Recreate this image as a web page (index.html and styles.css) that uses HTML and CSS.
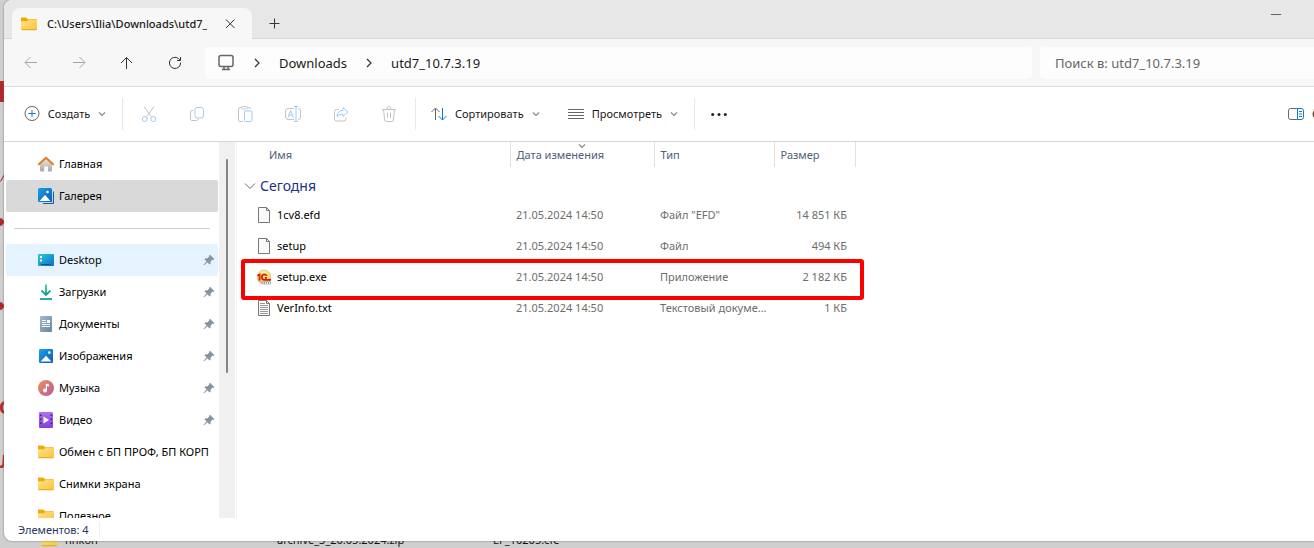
FILE: index.html
```html
<!DOCTYPE html>
<html lang="ru">
<head>
<meta charset="utf-8">
<title>C:\Users\Ilia\Downloads\utd7_10.7.3.19</title>
<link rel="stylesheet" href="styles.css">
</head>
<body>
<svg class="defs" aria-hidden="true">
  <defs>
    <linearGradient id="gFolder" x1="0" y1="0" x2="1" y2="1"><stop offset="0" stop-color="#ffe08a"/><stop offset="1" stop-color="#fcc43a"/></linearGradient>
    <linearGradient id="gBlue" x1="0" y1="0" x2="1" y2="1"><stop offset="0" stop-color="#1ba0e6"/><stop offset="1" stop-color="#0a5cb8"/></linearGradient>
    <linearGradient id="gDesk" x1="0" y1="0" x2="1" y2="1"><stop offset="0" stop-color="#2bcbd6"/><stop offset="1" stop-color="#0b6fc4"/></linearGradient>
    <linearGradient id="gDown" x1="0" y1="0" x2="0" y2="1"><stop offset="0" stop-color="#3cc98f"/><stop offset="1" stop-color="#0f9f8f"/></linearGradient>
    <linearGradient id="gDoc" x1="0" y1="0" x2="1" y2="1"><stop offset="0" stop-color="#a5bace"/><stop offset="1" stop-color="#6385a5"/></linearGradient>
    <linearGradient id="gMusic" x1="0" y1="0" x2="1" y2="1"><stop offset="0" stop-color="#f09152"/><stop offset="1" stop-color="#b25ba8"/></linearGradient>
    <linearGradient id="gVideo" x1="0" y1="0" x2="0" y2="1"><stop offset="0" stop-color="#b070f0"/><stop offset="1" stop-color="#8140dc"/></linearGradient>
    <linearGradient id="gHome" x1="0" y1="0" x2="0" y2="1"><stop offset="0" stop-color="#ececec"/><stop offset="1" stop-color="#a8a8a8"/></linearGradient>
    <radialGradient id="gApp" cx=".45" cy=".3" r=".75"><stop offset="0" stop-color="#fff9b0"/><stop offset=".6" stop-color="#f8de68"/><stop offset="1" stop-color="#c69a45"/></radialGradient>
  </defs>
  <symbol id="folder" viewBox="0 0 16 16"><path fill="#f2a900" d="M0 2.600Q0 1.500 1.100 1.500H5.200L7 3.200H15Q16 3.200 16 4.200V8H0z"/><path fill="url(#gFolder)" d="M0 5.200H6L7.500 3.800H15Q16 3.800 16 4.800V13Q16 14 15 14H1Q0 14 0 13z"/><path fill="#e8a317" d="M.2 13.300H15.800Q15.500 14.200 14.800 14.200H1.200Q.5 14.200.2 13.300z"/></symbol>
  <symbol id="pin" viewBox="0 0 12 12"><path fill="#8695a3" d="M7 .8 11.300 5 10.400 5.900 9.500 5.700 7.600 7.600 7.500 9.700 6.600 10.500 4.300 8.300 1.200 11.200.5 10.700 3.500 7.400 1.400 5.300 2.200 4.400 4.400 4.300 6.300 2.500 6.100 1.600z"/></symbol>
  <symbol id="chev" viewBox="0 0 8 8"><path fill="none" stroke="#8a8a8a" stroke-width="1.200" d="M1 2.500 4 5.500 7 2.500"/></symbol>
  <symbol id="picture" viewBox="0 0 16 16"><rect x="1" y="1" width="14" height="14" rx="1.200" fill="url(#gBlue)"/><path fill="#fff" d="M2.500 13.500 8 7.800 13.500 13.500z"/><circle cx="11.300" cy="4.600" r="1.300" fill="#fff"/></symbol>
  <symbol id="page" viewBox="0 0 14 18"><path fill="#fafafa" stroke="#777" d="M1.500 1.500H9.500L12.500 4.500V16.500H1.500z"/><path fill="none" stroke="#777" d="M9.500 1.500V4.500H12.500"/></symbol>
</svg>

<div class="desktop">
  <div class="edge" aria-hidden="true">
    <span class="mark block"></span><span class="mark slash"></span>
    <span class="mark gem first"></span><span class="mark gem second"></span>
    <span class="mark letter upper">С</span><span class="mark letter lower">Л</span>
  </div>

  <div class="window">
    <header class="titlebar">
      <div class="tab">
        <svg class="i16"><use href="#folder"/></svg>
        <span class="tab-title">C:\Users\Ilia\Downloads\utd7_10.7.3.19</span>
        <button class="plain" aria-label="Закрыть вкладку"><svg class="i12" viewBox="0 0 12 12"><path class="dark" d="m2 1.500 8.500 8.500m0-8.500L2 10"/></svg></button>
      </div>
      <button class="plain newtab" aria-label="Новая вкладка"><svg class="i12" viewBox="0 0 12 12"><path class="dark" d="M6.500 1.500v10M1.500 6.500h10"/></svg></button>
      <button class="plain minimize" aria-label="Свернуть"><svg class="i12" viewBox="0 0 12 12"><path class="gray" d="M1 6.500h10"/></svg></button>
    </header>

    <nav class="navbar" aria-label="Навигация">
      <button class="plain nav" aria-label="Назад"><svg class="i14" viewBox="0 0 14 14"><path class="faint" d="M13 6.500H1.500M6.500 1 1 6.500l5.500 5.500"/></svg></button>
      <button class="plain nav" aria-label="Вперёд"><svg class="i14" viewBox="0 0 14 14"><path class="faint" d="M1 6.500h11.500M7.500 1 13 6.500l-5.500 5.500"/></svg></button>
      <button class="plain nav" aria-label="Вверх"><svg class="i14" viewBox="0 0 14 14"><path class="dark" d="M6.500 13V1.500M1 7 6.500 1.500 12 7"/></svg></button>
      <button class="plain nav" aria-label="Обновить"><svg class="i14" viewBox="0 0 14 14"><path class="dark" d="M12.600 6.500A5.600 5.600 0 1 1 10.500 2.500L12 4M12.500 1v3.500H9"/></svg></button>
      <div class="address">
        <svg class="i18" viewBox="0 0 18 18"><rect class="pc" x="2" y="1.500" width="14" height="11" rx="2"/><path class="pc" d="M7 12.500v2.500m4-2.500v2.500M5 15.500h8"/></svg>
        <svg class="i12" viewBox="0 0 12 12"><path class="crumb" d="m4 2 4 4-4 4"/></svg>
        <a href="#downloads">Downloads</a>
        <svg class="i12" viewBox="0 0 12 12"><path class="crumb" d="m4 2 4 4-4 4"/></svg>
        <a href="#utd7">utd7_10.7.3.19</a>
      </div>
      <input class="search" type="search" aria-label="Поиск" placeholder="Поиск в: utd7_10.7.3.19">
    </nav>

    <div class="toolbar">
      <button class="plain cmd create"><svg class="i16" viewBox="0 0 16 16"><circle class="gray" cx="8" cy="7.500" r="7"/><path class="blue" d="M8 4v7M4.500 7.500h7"/></svg>Создать<svg class="i8"><use href="#chev"/></svg></button>
      <div class="group tools">
        <button class="plain" aria-label="Вырезать"><svg class="i16" viewBox="0 0 16 16"><path class="pale" d="M3 .5 10.500 11M13 .5 5.500 11"/><circle class="sky" cx="3.700" cy="13" r="2.500"/><circle class="sky" cx="12.300" cy="13" r="2.500"/></svg></button>
        <button class="plain" aria-label="Копировать"><svg class="i16" viewBox="0 0 16 16"><path class="pale" d="M4.500 4.500H3Q1.500 4.500 1.500 6v7Q1.500 14.500 3 14.500h4.500Q9 14.500 9.500 13"/><rect class="sky" x="6" y="1.500" width="8.500" height="10.500" rx="2"/></svg></button>
        <button class="plain" aria-label="Вставить"><svg class="i16" viewBox="0 0 16 16"><path class="pale" d="M6 15.500H3Q1.500 15.500 1.500 14V3Q1.500 1.500 3 1.500h1.500m6 0H12Q13.500 1.500 13.500 3"/><rect class="pale" x="4.500" y=".5" width="6" height="2.500" rx="1"/><rect class="sky" x="7.500" y="5" width="7.500" height="10.500" rx="1"/></svg></button>
        <button class="plain" aria-label="Переименовать"><svg class="i16" viewBox="0 0 16 16"><path class="pale" d="M9 2.500H3Q.5 2.500.5 5v6Q.5 13.500 3 13.500h6m4-11q2.500 0 2.500 2.500v6q0 2.500-2.500 2.500"/><path class="sky" d="m3 11.500 2.700-7 2.700 7M3.800 9h3.800M9 .5h4M11 .5v15M9 15.500h4"/></svg></button>
        <button class="plain" aria-label="Поделиться"><svg class="i16" viewBox="0 0 16 16"><path class="pale" d="M6 3.500H3.500Q1.500 3.500 1.500 5.500V13Q1.500 15 3.500 15H11Q13 15 13 13v-1.500"/><path class="sky" d="M10 1.500 15 6l-5 4.500V8Q6 8 4 10.500 4.500 4.500 10 4.200z"/></svg></button>
        <button class="plain" aria-label="Удалить"><svg class="i16" viewBox="0 0 16 16"><path class="pale" d="M1 3.500h14M2.500 3.500l1.200 10.500q.2 1.500 1.500 1.500h5.600q1.300 0 1.500-1.500l1.200-10.500M6 3.500Q6 .5 8 .5t2 3M6.500 6.500v5.500m3-5.500v5.500"/></svg></button>
      </div>
      <div class="group views">
        <button class="plain cmd"><svg class="i16" viewBox="0 0 16 16"><path class="gray" d="M4.500 14V2M.5 6l4-4 4 4"/><path class="blue" d="M11.500 2v12m-4-4 4 4 4-4"/></svg>Сортировать<svg class="i8"><use href="#chev"/></svg></button>
        <button class="plain cmd"><svg class="i16" viewBox="0 0 16 16"><path class="gray" d="M0 3.500h16m-16 3h16m-16 3h16m-16 3h16"/></svg>Просмотреть<svg class="i8"><use href="#chev"/></svg></button>
      </div>
      <div class="group more"><button class="plain" aria-label="Дополнительно"><svg class="i16" viewBox="0 0 16 16"><g fill="#222"><circle cx="1.700" cy="8.500" r="1.500"/><circle cx="8" cy="8.500" r="1.500"/><circle cx="14.300" cy="8.500" r="1.500"/></g></svg></button></div>
      <button class="plain cmd details"><svg class="i16" viewBox="0 0 16 16"><path class="gray" d="M9.500 2.500h-7q-2 0-2 2v7q0 2 2 2h7"/><path class="blue" d="M9.500 2.500H13q2.500 0 2.500 2v7q0 2-2.500 2H9.500zM11 5.500h3M11 8h3m-3 2.500h3"/></svg>Сведения</button>
    </div>

    <div class="body">
      <aside class="sidebar">
        <ul class="places">
          <li><a href="#home"><svg class="i16" viewBox="0 0 16 16"><path fill="url(#gHome)" d="M2 7 8 1.500 14 7v7.500q0 1-1 1h-3V10.500H6.200v5H3q-1 0-1-1z"/><path fill="none" stroke="#e5791c" stroke-width="2" stroke-linejoin="round" stroke-linecap="round" d="M1 8.200 8 1.700 15 8.200"/></svg><span>Главная</span></a></li>
          <li><a class="current" href="#gallery"><svg class="i16" viewBox="0 0 16 16"><path fill="#0a5cb8" d="M4 3h10.500q1.500 0 1.500 1.500V14.500q0 1.500-1.500 1.500H5z"/><rect width="14" height="14" rx="1.500" fill="url(#gBlue)"/><path fill="none" stroke="#d9d9d9" d="M14.500 2v12.500H3"/><path fill="#fff" d="M1.500 13 7 7l5.500 6z"/><circle cx="9.500" cy="4" r="1.300" fill="#fff"/></svg><span>Галерея</span></a></li>
          <li class="rule"></li>
          <li><a class="hover" href="#desktop"><svg class="i16" viewBox="0 0 16 16"><rect y="2" width="16" height="12" rx="1" fill="url(#gDesk)"/><path fill="#fff" d="M2 4h2v2H2zm0 3.500h2v2H2z"/><path stroke="#064b83" d="M3 12.500h11" stroke-dasharray="8 1 1 1"/></svg><span>Desktop</span><svg class="i12"><use href="#pin"/></svg></a></li>
          <li><a href="#loads"><svg class="i16" viewBox="0 0 16 16"><path fill="none" stroke="url(#gDown)" stroke-width="1.800" d="M3.500 6.500 8 11l4.500-4.500M8 11 8.010.5"/><path stroke="#16a392" stroke-width="1.800" d="M2 15h12"/></svg><span>Загрузки</span><svg class="i12"><use href="#pin"/></svg></a></li>
          <li><a href="#docs"><svg class="i16" viewBox="0 0 16 16"><rect x="2" width="12" height="16" rx="1" fill="url(#gDoc)"/><path stroke="#fff" d="M4 4.500h4M4 6.500h4m-4 2h8m-8 2h8"/><path fill="#fff" d="M9 4h3v3H9z"/></svg><span>Документы</span><svg class="i12"><use href="#pin"/></svg></a></li>
          <li><a href="#pics"><svg class="i16"><use href="#picture"/></svg><span>Изображения</span><svg class="i12"><use href="#pin"/></svg></a></li>
          <li><a href="#music"><svg class="i16" viewBox="0 0 16 16"><circle cx="8" cy="8" r="8" fill="url(#gMusic)"/><circle cx="7" cy="10.500" r="2" fill="#fff"/><path fill="#fff" d="M7.800 3.500 11 4.500V6.500L9 6v4.500H7.800z"/></svg><span>Музыка</span><svg class="i12"><use href="#pin"/></svg></a></li>
          <li><a href="#video"><svg class="i16" viewBox="0 0 16 16"><rect x="1" y="0" width="14" height="16" rx="1" fill="url(#gVideo)"/><path fill="#fff" d="m5.500 4.500 5.500 3.500-5.500 3.500z"/><path stroke="#43208a" stroke-width="1.500" stroke-dasharray="1.500 2.500" d="M2.700 2.500v12m10.600-12v12"/></svg><span>Видео</span><svg class="i12"><use href="#pin"/></svg></a></li>
          <li><a href="#exchange"><svg class="i16"><use href="#folder"/></svg><span>Обмен с БП ПРОФ, БП КОРП</span></a></li>
          <li><a href="#shots"><svg class="i16"><use href="#folder"/></svg><span>Снимки экрана</span></a></li>
          <li><a href="#useful"><svg class="i16"><use href="#folder"/></svg><span>Полезное</span></a></li>
        </ul>
        <div class="scroll"><div class="thumb"></div></div>
      </aside>

      <main class="files">
        <table>
          <colgroup><col class="c-name"><col class="c-date"><col class="c-type"><col class="c-size"></colgroup>
          <thead><tr><th>Имя</th><th class="sorted">Дата изменения<svg class="i8 sort"><use href="#chev"/></svg></th><th>Тип</th><th>Размер</th></tr></thead>
          <tbody>
            <tr class="section"><td colspan="4"><div class="cell"><svg class="i12" viewBox="0 0 12 12"><path class="gray" d="m1 3.500 5 5 5-5"/></svg>Сегодня</div></td></tr>
            <tr><td><div class="cell"><svg class="page"><use href="#page"/></svg>1cv8.efd</div></td><td>21.05.2024 14:50</td><td>Файл "EFD"</td><td>14 851 КБ</td></tr>
            <tr><td><div class="cell"><svg class="page"><use href="#page"/></svg>setup</div></td><td>21.05.2024 14:50</td><td>Файл</td><td>494 КБ</td></tr>
            <tr><td><div class="cell"><svg class="page" viewBox="1 1 14 15"><circle cx="8" cy="8.500" r="7" fill="url(#gApp)" stroke="#c9b99b" stroke-width=".6"/><path fill="none" stroke="#db1b10" stroke-width="1.800" d="M1.500 7.300 3.600 6v6M10.800 7.400Q9.900 5.900 8.200 5.900 5.900 6.100 5.900 8.700t2.400 2.600H15M11 9.300H8.800"/><path fill="#fff" stroke="#889" stroke-width=".5" d="M7 13.300h8.500v2.200H7z"/><path stroke="#338" stroke-width=".8" stroke-dasharray="1 1" d="M8 14.400h7"/></svg>setup.exe</div></td><td>21.05.2024 14:50</td><td>Приложение</td><td>2 182 КБ</td></tr>
            <tr><td><div class="cell"><svg class="page" viewBox="0 0 14 18"><use href="#page" width="14" height="18"/><path stroke="#999" d="M3 4.500h5M3 6.500h8m-8 2h8m-8 2h8m-8 2h8m-8 2h8"/></svg>VerInfo.txt</div></td><td>21.05.2024 14:50</td><td>Текстовый документ</td><td>1 КБ</td></tr>
          </tbody>
        </table>
        <div class="highlight"></div>
      </main>
    </div>

    <footer class="status"><span>Элементов: 4</span></footer>
  </div>

  <div class="behind" aria-hidden="true"><svg class="i16"><use href="#folder"/></svg><span class="b-folder">hhkon</span><span class="b-file">archive_3_20.05.2024.zip</span><span>EF_10205.cfe</span></div>
</div>
</body>
</html>
```

FILE: styles.css
```css
* { box-sizing: border-box; }
body { margin: 0; font: 12px/16px "Noto Sans", "Open Sans", sans-serif; color: #1a1a1a; }
a { color: inherit; text-decoration: none; }
svg { display: block; flex: none; }
.defs { position: absolute; width: 0; height: 0; }
.i8 { width: 8px; height: 8px; }
.i12 { width: 12px; height: 12px; }
.i14 { width: 14px; height: 14px; }
.i16 { width: 16px; height: 16px; }
.i18 { width: 18px; height: 18px; }
.dark, .gray, .faint, .pale, .sky, .blue, .pc, .crumb { fill: none; stroke: #333; }
.gray { stroke: #666; }
.faint { stroke: #a6a6a6; }
.pale { stroke: #c4c4c4; }
.sky { stroke: #9fcdf0; }
.blue { stroke: #0f78d4; }
.pc { stroke: #666; stroke-width: 1.5; }
.crumb { stroke-width: 1.2; }
.plain { display: flex; align-items: center; justify-content: center; padding: 0; border: 0; background: none; font: inherit; color: inherit; white-space: nowrap; }

.desktop { position: relative; display: flex; flex-direction: column; height: 100vh; padding-left: 4px; overflow: hidden; background: #cfcfcf; }
.window { position: relative; flex: 1; min-height: 0; display: flex; flex-direction: column; overflow: hidden; background: #fff; border-radius: 8px 0 0 8px; box-shadow: 0 0 2px #666; }

.titlebar { display: flex; height: 39px; padding: 8px 32px 0 8px; background: #e7e7e7; border-bottom: 1px solid #d8d8d8; }
.tab { display: flex; align-items: center; width: 240px; height: 31px; padding: 0 16px 0 9px; background: #f7f7f7; border-radius: 8px 8px 0 0; }
.tab-title { flex: 1; min-width: 0; margin: 0 17px 0 10px; overflow: hidden; white-space: nowrap; font-size: 11px; font-weight: 500; }
.newtab { margin-left: 16px; height: 30px; }
.minimize { margin-left: auto; height: 12px; }

.navbar { display: flex; align-items: center; height: 48px; padding-left: 3px; background: #f7f7f7; border-bottom: 1px solid #dcdcdc; font-size: 13px; }
.nav { width: 48px; height: 32px; }
.address { flex: 1; display: flex; align-items: center; gap: 16px; height: 32px; margin: 0 8px 0 6px; padding: 0 12px; background: #fdfdfd; border-radius: 5px; }
.search { width: 274px; height: 32px; padding: 0 15px; border: 0; border-radius: 5px 0 0 5px; background: #fdfdfd; font: inherit; color: #666; }
.search::placeholder { color: #666; opacity: 1; }

.toolbar { display: flex; align-items: center; height: 55px; border-bottom: 1px solid #d6d6d6; overflow: hidden; font-size: 11px; }
.cmd { gap: 8px; }
.create { width: 118px; padding-left: 4px; }
.group { display: flex; align-items: center; height: 32px; border-left: 1px solid #e8e8e8; }
.tools { width: 293px; gap: 32px; padding-left: 18px; }
.views { width: 279px; gap: 28px; padding-left: 15px; }
.more { padding-left: 16px; }
.details { width: 26px; margin-left: auto; justify-content: flex-start; overflow: hidden; }

.body { flex: 1; min-height: 0; display: flex; }
.sidebar { display: flex; width: 231px; overflow: hidden; }
.places { flex: 1; min-width: 0; margin: 0; padding: 6px 1px 0 2px; list-style: none; color: #000; font-size: 11px; }
.places a { display: flex; align-items: center; gap: 5px; height: 32px; padding: 0 3px 0 32px; border-radius: 2px; }
.places span { flex: 1; min-width: 0; white-space: nowrap; }
.places a.current { background: #d9d9d9; }
.places a.hover { background: #e5f3ff; }
.rule { height: 32px; padding: 16px 8px 0; }
.rule::before { content: ""; display: block; height: 1px; background: #d0d0d0; }
.scroll { width: 16px; padding: 17px 7px 0; background: #f0f0f0; }
.thumb { height: 214px; background: #858585; border-radius: 1px; }

.files { position: relative; flex: 1; min-width: 0; margin-left: 1px; border-left: 1px solid #f3f3f3; }
table { table-layout: fixed; width: 618px; border-collapse: collapse; font-size: 11px; color: #6d6d6d; }
.c-name { width: 273px; }
.c-date { width: 144px; }
.c-type { width: 120px; }
.c-size { width: 81px; }
th { position: relative; height: 25px; padding: 0 6px; border-right: 1px solid #e2e2e2; text-align: left; font-weight: 400; color: #4c607a; }
th:first-child { padding-left: 32px; }
td { height: 31px; padding: 0 6px; overflow: hidden; white-space: nowrap; text-overflow: ellipsis; }
td:first-child { padding-left: 20px; color: #000; }
td:last-child { padding-right: 8px; text-align: right; }
.cell { display: flex; align-items: center; gap: 6px; }
.page { width: 14px; height: 18px; }
.section td:first-child { height: 32px; padding: 5px 7px 0; text-align: left; font-size: 14px; color: #1e3287; }
.section .cell { gap: 4px; }
.sort { position: absolute; top: 0; left: 50%; margin-left: -4px; }
.highlight { position: absolute; top: 117px; left: 4px; width: 623px; height: 41px; border: 4px solid #fe0000; border-radius: 3px; }

.status { display: flex; align-items: center; height: 23px; padding-left: 14px; font-size: 11px; color: #26395c; }
.status span { padding-right: 10px; border-right: 1px solid #efefef; }

.behind { display: flex; align-items: flex-end; height: 7px; padding-left: 37px; overflow: hidden; color: #111; font-size: 11px; white-space: nowrap; }
.behind span { height: 16px; line-height: 16px; }
.b-folder { width: 214px; padding-left: 8px; }
.b-file { width: 222px; padding-left: 6px; }

.edge { position: absolute; inset: 0 auto 0 0; width: 5px; overflow: hidden; }
.mark { position: absolute; left: 0; color: #b3262b; }
.block { top: 81px; width: 4px; height: 21px; background: #b3262b; }
.slash { top: 174px; width: 1px; height: 8px; margin-left: 2px; background: #b3262b; transform: rotate(30deg); }
.gem { width: 6px; height: 6px; margin-left: -2px; background: #b3262b; transform: rotate(45deg); }
.first { top: 219px; }
.second { top: 303px; }
.letter { font-size: 18px; font-weight: 700; line-height: 18px; }
.upper { top: 398px; margin-left: -1px; }
.lower { top: 452px; }
```
